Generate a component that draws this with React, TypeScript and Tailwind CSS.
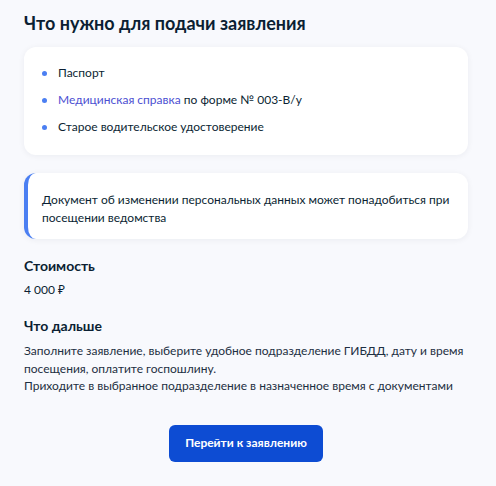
export default function App() {
	return (
		<div className="min-h-[486px] w-full bg-[#f8f9fd] pl-6 pr-7 pt-[11px] pb-6 text-[#0b1f33]" style={{ fontFamily: "Lato, 'Noto Sans', sans-serif" }}>
			{/* title */}
			<h1 className="text-[18px] font-bold leading-6">Что нужно для подачи заявления</h1>

			{/* documents */}
			<div className="mt-[12px] rounded-xl bg-white pt-[17px] pb-[19px] pl-[18px] pr-5 shadow-[0_1px_6px_rgba(11,31,51,0.06)]">
				<ul className="flex flex-col gap-[9px] text-[12px] leading-[18px]">
					<li className="flex items-center gap-[11px]">
						<span className="h-[5px] w-[5px] shrink-0 rounded-full bg-[#4b7ff2]" />
						<span>Паспорт</span>
					</li>
					<li className="flex items-center gap-[11px]">
						<span className="h-[5px] w-[5px] shrink-0 rounded-full bg-[#4b7ff2]" />
						<span>
							<span className="text-[#4c4fd2]">Медицинская справка</span> по форме № 003-В/у
						</span>
					</li>
					<li className="flex items-center gap-[11px]">
						<span className="h-[5px] w-[5px] shrink-0 rounded-full bg-[#4b7ff2]" />
						<span>Старое водительское удостоверение</span>
					</li>
				</ul>
			</div>

			{/* notice */}
			<div className="mt-[18px] overflow-hidden rounded-xl border-l-4 border-[#4b7ff2] bg-white pt-[18px] pb-[12px] pr-2 pl-[14px] text-[12px] leading-[18px] shadow-[0_1px_6px_rgba(11,31,51,0.06)]">
				Документ об изменении персональных данных может понадобиться при посещении ведомства
			</div>

			{/* cost */}
			<h2 className="mt-[17px] text-[14px] font-bold leading-5">Стоимость</h2>
			<p className="mt-[4px] text-[12px] leading-5">4 000 ₽</p>

			{/* next */}
			<h2 className="mt-[16px] text-[14px] font-bold leading-5">Что дальше</h2>
			<p className="mt-[6px] text-[12px] leading-[17.5px] text-[#1d2f42]">
				Заполните заявление, выберите удобное подразделение ГИБДД, дату и время посещения, оплатите госпошлину.
				<br />
				Приходите в выбранное подразделение в назначенное время с документами
			</p>

			<div className="mt-[30px] flex justify-center">
				<button className="h-[37px] w-[154px] rounded-md bg-[#0d4cd3] text-[12px] font-bold text-white">
					Перейти к заявлению
				</button>
			</div>
		</div>
	);
}
